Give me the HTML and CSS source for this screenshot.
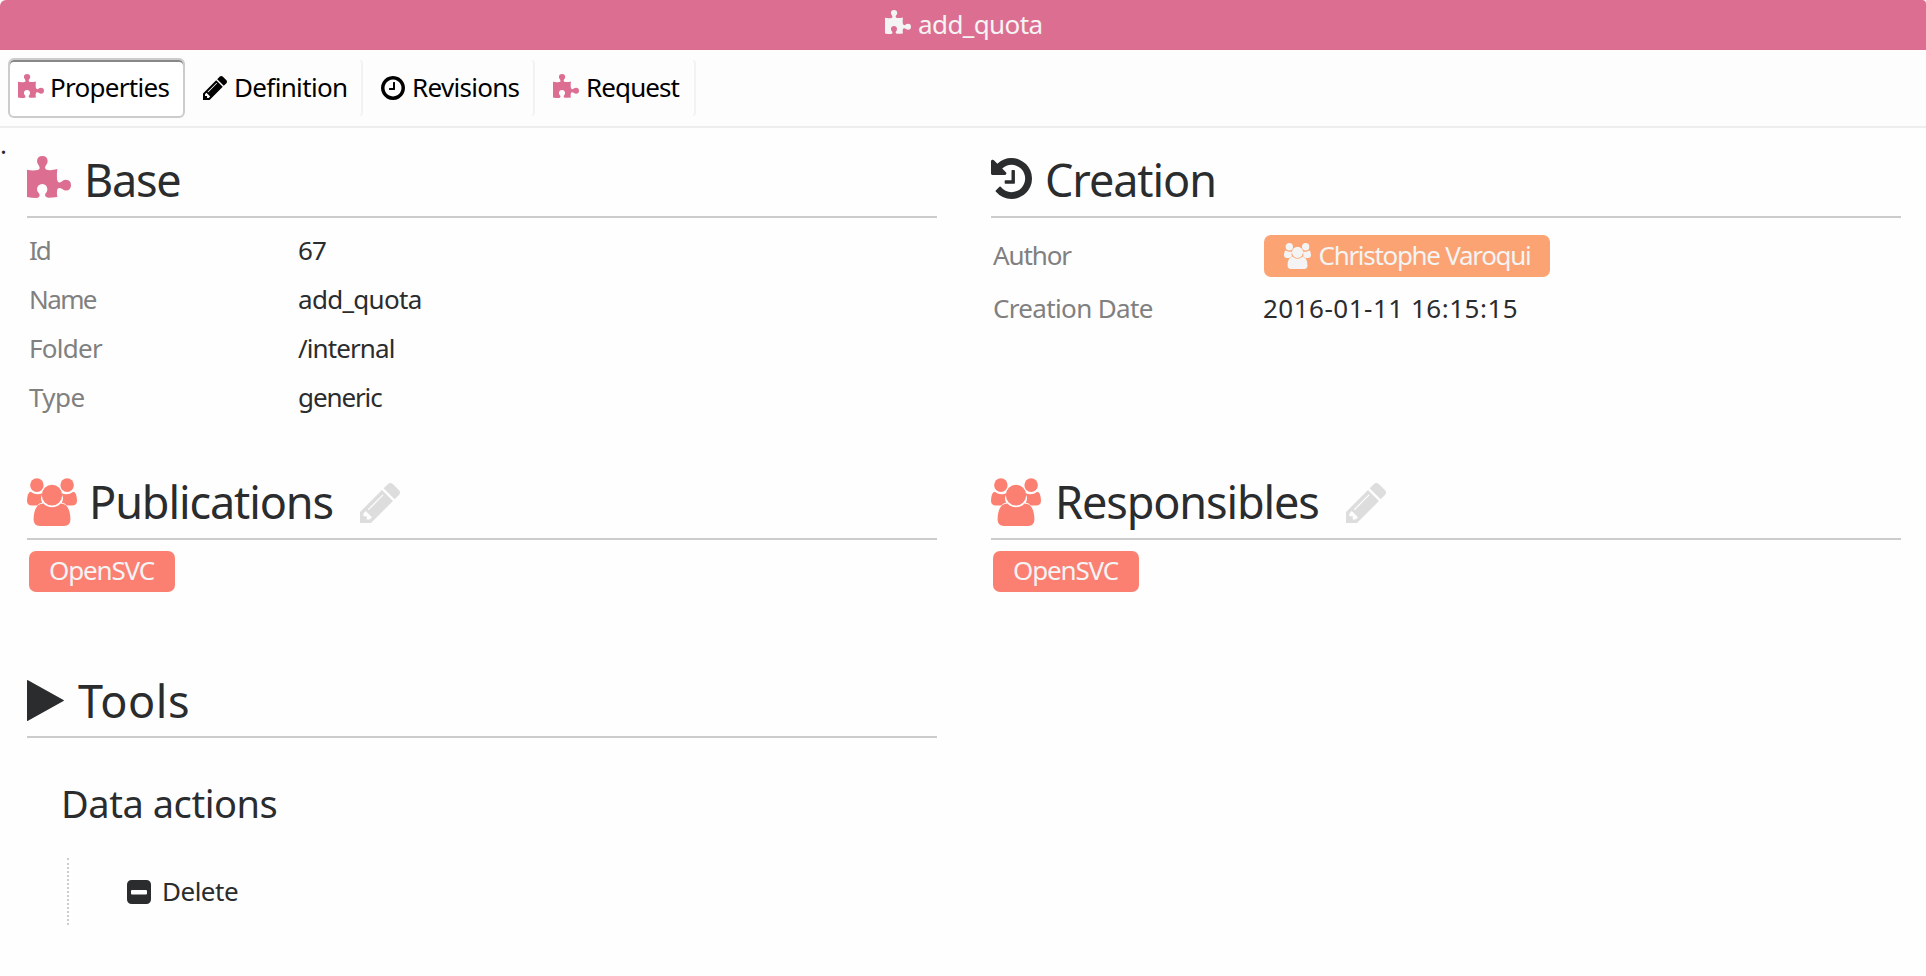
FILE: index.html
```html
<!DOCTYPE html>
<html lang="en">
<head>
<meta charset="utf-8">
<title>add_quota</title>
<link rel="stylesheet" href="styles.css">
</head>
<body>
<svg class="defs" width="0" height="0">
  <symbol id="puzzle" viewBox="0 0 132 125" preserveAspectRatio="none"><path d="M0 41Q16 45 32 42Q38 41 38 36Q38 31 34 26Q30 21 30 15Q31 0 46 0Q61 0 62 15Q62 21 58 26Q54 30 54 35Q55 42 63 42Q78 43 91 39Q89 54 90 69Q91 78 98 79Q102 79 107 74Q111 71 117 71Q132 72 132 87Q132 102 117 103Q111 103 107 99Q102 95 97 95Q90 96 90 105Q89 113 91 122Q78 124 63 124Q55 123 54 117Q54 113 58 109Q61 105 61 98Q60 84 46 83Q31 84 30 98Q30 105 34 109Q38 113 38 118Q37 124 29 125Q14 125 0 122Z"/></symbol>
  <symbol id="pencil" viewBox="128 149 1515 1515"><path d="M491 1536l91-91-235-235-91 91v107h128v128h107zm523-928q0-22-22-22-10 0-17 7l-542 542q-7 7-7 17 0 22 22 22 10 0 17-7l542-542q7-7 7-17zm-54-192l416 416-832 832h-416v-416zm683 96q0 53-37 90l-166 166-416-416 166-165q36-38 90-38 53 0 91 38l235 234q37 39 37 91z"/></symbol>
  <symbol id="clock" viewBox="128 128 1536 1536"><path d="M1024 544v448q0 14-9 23t-23 9h-320q-14 0-23-9t-9-23v-64q0-14 9-23t23-9h224v-352q0-14 9-23t23-9h64q14 0 23 9t9 23zm416 352q0-148-73-273t-198-198-273-73-273 73-198 198-73 273 73 273 198 198 273 73 273-73 198-198 73-273zm224 0q0 209-103 385.5t-279.5 279.5-385.5 103-385.5-103-279.5-279.5-103-385.5 103-385.5 279.5-279.5 385.5-103 385.5 103 279.5 279.5 103 385.5z"/></symbol>
  <symbol id="history" viewBox="128 128 1536 1536"><path d="M1664 896q0 156-61 298t-164 245-245 164-298 61q-172 0-327-72.5t-264-204.5q-7-10-6.5-22.5t8.5-20.5l137-138q10-9 25-9 16 2 23 12 73 95 179 147t225 52q104 0 198.5-40.5t163.5-109.5 109.5-163.5 40.5-198.5-40.5-198.5-109.5-163.5-163.5-109.5-198.5-40.5q-98 0-188 35.5t-160 101.5l137 138q31 30 14 69-17 40-59 40h-448q-26 0-45-19t-19-45v-448q0-42 40-59 39-17 69 14l130 129q107-101 244.5-156.5t284.5-55.5q156 0 298 61t245 164 164 245 61 298zm-640-288v448q0 14-9 23t-23 9h-320q-14 0-23-9t-9-23v-64q0-14 9-23t23-9h224v-352q0-14 9-23t23-9h64q14 0 23 9t9 23z"/></symbol>
  <symbol id="users" viewBox="0 0 152 143" preserveAspectRatio="none">
    <circle cx="30" cy="21" r="20.500"/><circle cx="122" cy="21" r="20.500"/>
    <path d="M11 41Q29 54 48 45Q38 60 46 74Q37 75 31 82H15Q0 82 0 68Q1 42 11 41Z"/>
    <path d="M141 41Q123 54 104 45Q114 60 106 74Q115 75 121 82H137Q152 82 152 68Q151 42 141 41Z"/>
    <circle cx="76" cy="51" r="31"/>
    <path d="M50 76A36 36 0 0 0 102 76Q131 76 132 124Q132 143 113 143H39Q20 143 20 124Q21 76 50 76Z"/>
  </symbol>
  <symbol id="play" viewBox="0 0 37 41"><path d="M0 .6Q0-.3 1 .2L36.500 20Q37.400 20.500 36.500 21L1 40.800Q0 41.300 0 40.400Z"/></symbol>
  <symbol id="minus" viewBox="0 0 24 24"><path fill-rule="evenodd" d="M4.500 0h15A4.500 4.500 0 0 1 24 4.500v15a4.500 4.500 0 0 1-4.500 4.500h-15A4.500 4.500 0 0 1 0 19.500v-15A4.500 4.500 0 0 1 4.500 0zM5 10a1 1 0 0 0-1 1v2.500a1 1 0 0 0 1 1h14a1 1 0 0 0 1-1V11a1 1 0 0 0-1-1z"/></symbol>
</svg>

<header class="titlebar">
  <svg class="icon i-puzzle"><use href="#puzzle"/></svg><span class="t-title">add_quota</span>
</header>
<nav class="tabs">
  <a class="tab active w-prop"><svg class="icon i-puzzle pink"><use href="#puzzle"/></svg><span>Properties</span></a>
  <a class="tab w-def"><svg class="icon i-sq"><use href="#pencil"/></svg><span>Definition</span></a>
  <a class="tab w-rev"><svg class="icon i-sq"><use href="#clock"/></svg><span>Revisions</span></a>
  <a class="tab w-req"><svg class="icon i-puzzle pink"><use href="#puzzle"/></svg><span>Request</span></a>
</nav>
<main class="content">
  <span class="dot">.</span>
  <section class="block">
    <h1><svg class="icon h-puzzle pink"><use href="#puzzle"/></svg><span class="t-base">Base</span></h1>
    <dl class="rows">
      <dt class="t-id">Id</dt><dd>67</dd>
      <dt class="t-name">Name</dt><dd class="t-quota">add_quota</dd>
      <dt class="t-folder">Folder</dt><dd>/internal</dd>
      <dt class="t-type">Type</dt><dd class="t-generic">generic</dd>
    </dl>
  </section>
  <section class="block">
    <h1><svg class="icon h-history"><use href="#history"/></svg><span class="t-crea">Creation</span></h1>
    <dl class="rows creation">
      <dt class="t-auth">Author</dt><dd><span class="badge author"><svg class="icon i-users"><use href="#users"/></svg><span>Christophe Varoqui</span></span></dd>
      <dt class="t-cdate">Creation Date</dt><dd class="t-date">2016-01-11 16:15:15</dd>
    </dl>
  </section>
  <section class="block">
    <h1><svg class="icon h-users"><use href="#users"/></svg><span class="t-pub">Publications</span><svg class="icon edit"><use href="#pencil"/></svg></h1>
    <span class="badge org"><span>OpenSVC</span></span>
  </section>
  <section class="block">
    <h1><svg class="icon h-users"><use href="#users"/></svg><span class="t-resp">Responsibles</span><svg class="icon edit"><use href="#pencil"/></svg></h1>
    <span class="badge org"><span>OpenSVC</span></span>
  </section>
  <section class="block tools">
    <h1><svg class="icon h-play"><use href="#play"/></svg><span class="t-tools">Tools</span></h1>
    <h2>Data actions</h2>
    <div class="actions"><svg class="icon i-sq"><use href="#minus"/></svg><span class="t-del">Delete</span></div>
  </section>
</main>
</body>
</html>
```
FILE: styles.css
```css
* { box-sizing: border-box; margin: 0; padding: 0; }
body {
  background: #fefefe;
  color: #2a2c2e;
  font-family: "Noto Sans", "Open Sans", sans-serif;
  font-size: 26px;
  line-height: 36px;
  letter-spacing: -0.9px;
  height: 976px;
  overflow: hidden;
}
.defs { position: absolute; }
.icon { display: block; flex: none; fill: currentColor; }
.pink { color: #dc6f91; }
.i-puzzle { width: 26px; height: 24px; margin-bottom: 3px; }
.i-sq { width: 24px; height: 24px; }
.i-users { width: 27px; height: 26px; }

.titlebar {
  height: 50px;
  display: flex;
  align-items: center;
  padding: 0 0 3px 885px;
  gap: 7px;
  background: #dc6f91;
  color: #f4f4f4;
  border-radius: 6px 4px 0 0;
}
.t-title { letter-spacing: -0.6px; }
.tabs {
  height: 78px;
  display: flex;
  padding: 8px 8px 0;
  background: #fdfdfd;
  border-bottom: 2px solid #eee;
  color: #000;
}
.tab {
  height: 60px;
  display: flex;
  align-items: center;
  border: 2px solid transparent;
  border-right-color: #f2f2f2;
  border-radius: 6px;
  padding: 0 0 1px 16px;
  gap: 7px;
  white-space: nowrap;
}
.tab span { padding-bottom: 1px; }
.tab.active {
  background: #fff;
  border-color: #ccc;
  padding-left: 8px;
  gap: 6px;
  box-shadow: inset 0 2px 0 #888;
}
.w-prop { width: 177px; letter-spacing: -0.7px; }
.w-def { width: 178px; letter-spacing: -0.65px; }
.w-rev { width: 172px; letter-spacing: -0.7px; }
.w-req { width: 161px; }

.content {
  position: relative;
  display: grid;
  grid-template-columns: 910px 910px;
  grid-template-rows: 322px 198px auto;
  column-gap: 54px;
  padding: 18px 25px 0 27px;
}
.dot { position: absolute; left: 0; top: -2px; }
h1 {
  display: flex;
  align-items: center;
  height: 72px;
  border-bottom: 2px solid #ccc;
  font-size: 45px;
  line-height: 60px;
  font-weight: 400;
  white-space: nowrap;
}
h1 span { padding-bottom: 3px; }
.h-puzzle { width: 44px; height: 42px; margin: 0 13px 8px 0; }
.h-history { width: 41px; height: 41px; margin: 0 13px 5px 0; }
.h-users { width: 50px; height: 48px; margin: 0 12px 3px 0; color: #fb8072; }
.h-play { width: 37px; height: 41px; margin: 0 14px 2px 0; }
.edit { width: 40px; height: 40px; margin: 0 0 1px 27px; color: #ddd; }
.t-base { letter-spacing: -1.3px; }
.t-crea { letter-spacing: -1.1px; }
.t-pub { letter-spacing: -1.1px; }
.t-resp { padding-left: 2px; letter-spacing: -1.1px; }
.t-tools { letter-spacing: 0.5px; }
.tools h1 span { padding-bottom: 1px; }
.rows {
  display: grid;
  grid-template-columns: 269px 1fr;
  grid-auto-rows: 49px;
  padding: 7px 2px;
  align-items: center;
}
.rows.creation { grid-template-columns: 270px 1fr; grid-auto-rows: 53px; padding-top: 10px; }
dt { color: #808080; }
.t-id { letter-spacing: -2px; }
.t-name { letter-spacing: -1.6px; }
.t-quota, .t-folder { letter-spacing: -0.7px; }
.t-type { letter-spacing: -0.6px; }
.t-generic, .t-auth { letter-spacing: -1.1px; }
.t-cdate { letter-spacing: -0.65px; }
.t-date { letter-spacing: 0.5px; }
.badge {
  display: inline-flex;
  align-items: center;
  justify-content: center;
  height: 42px;
  border-radius: 7px;
  color: #f4f4f4;
  vertical-align: top;
  white-space: nowrap;
}
.badge span { padding-bottom: 2px; }
.author { width: 286px; margin: 2px 0 0 1px; gap: 8px; background: #fba373; letter-spacing: -1.3px; }
.org { width: 146px; height: 41px; margin: 11px 0 0 2px; background: #fb8072; letter-spacing: -1.15px; }
.org span { padding: 0 1px 3px 0; }
h2 { margin: 38px 0 0 34px; font-size: 38px; line-height: 54px; font-weight: 400; letter-spacing: -0.45px; }
.actions {
  display: flex;
  align-items: center;
  gap: 11px;
  height: 67px;
  margin: 28px 0 0 40px;
  padding-left: 58px;
  border-left: 2px dotted #ccc;
}
.t-del { letter-spacing: -0.5px; padding-bottom: 1px; }
```
